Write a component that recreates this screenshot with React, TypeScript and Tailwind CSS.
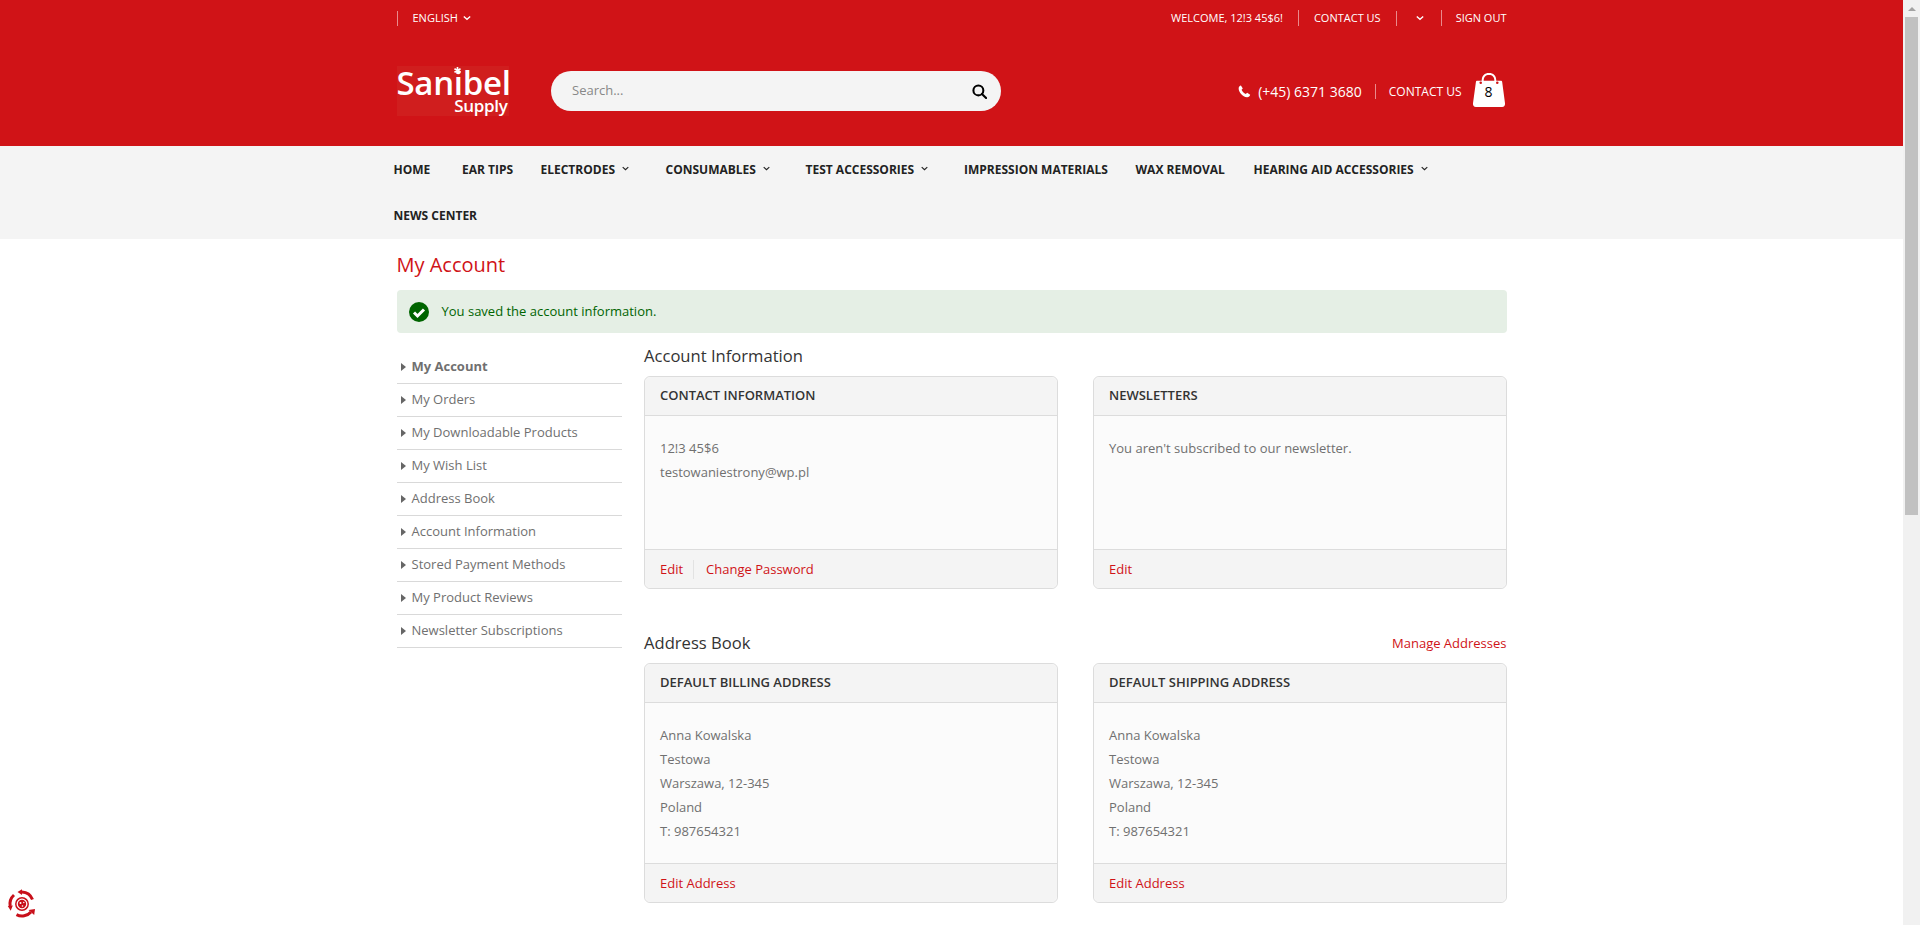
const sans = { fontFamily: '"Open Sans", sans-serif' };

function Chevron({ className }: { className: string }) {
  return (
    <svg viewBox="0 0 10 6" className={className} fill="none" stroke="currentColor" strokeWidth="1.7">
      <path d="M1 1l4 3.6L9 1" />
    </svg>
  );
}

const navTop = [
  { label: "Home", w: "w-[68.5px]" },
  { label: "Ear Tips", w: "w-[78.5px]" },
  { label: "Electrodes", arrow: true, w: "w-[125px]" },
  { label: "Consumables", arrow: true, w: "w-[140px]" },
  { label: "Test Accessories", arrow: true, w: "w-[158.5px]" },
  { label: "Impression Materials", w: "w-[171.5px]" },
  { label: "Wax Removal", w: "w-[118px]" },
  { label: "Hearing Aid Accessories", arrow: true, w: "w-[190px]" },
];

const side = [
  "My Account",
  "My Orders",
  "My Downloadable Products",
  "My Wish List",
  "Address Book",
  "Account Information",
  "Stored Payment Methods",
  "My Product Reviews",
  "Newsletter Subscriptions",
];

function Card({
  title,
  lines,
  links,
  tall,
}: {
  title: string;
  lines: string[];
  links: string[];
  tall?: boolean;
}) {
  return (
    <div className={`flex w-[414px] flex-col rounded-[6px] border border-[#dcdcdc] bg-[#fbfbfb] ${tall ? "h-[240px]" : "h-[213px]"}`}>
      <div className="flex h-[39px] shrink-0 items-center rounded-t-[6px] border-b border-[#dcdcdc] bg-[#f4f4f4] px-[15.5px] text-[13px] font-semibold uppercase text-[#333]">
        {title}
      </div>
      <div className="flex-1 px-[15.5px] pt-[20px] text-[13px] leading-[24px] text-[#707070]">
        {lines.map((l) => (
          <p key={l}>{l}</p>
        ))}
      </div>
      <div className="flex h-[39px] shrink-0 items-center rounded-b-[6px] border-t border-[#dcdcdc] bg-[#f4f4f4] px-[15.5px] pt-[1px] text-[13px] text-[#d01317]">
        {links.map((l, i) => (
          <span key={l} className={i > 0 ? "ml-[10px] border-l border-[#e2e2e2] pl-[12px]" : ""}>
            {l}
          </span>
        ))}
      </div>
    </div>
  );
}

export default function App() {
  const address = ["Anna Kowalska", "Testowa", "Warszawa, 12-345", "Poland", "T: 987654321"];
  return (
    <div style={sans} className="relative flex h-[925px] w-[1920px] overflow-hidden bg-white">
      <div className="w-[1903px]">
        <header className="h-[146px] bg-[#d01317] text-white">
          <div className="mx-auto w-[1110px]">
            <div className="flex h-[36px] items-center text-[11px] uppercase">
              <div className="flex h-[15px] items-center border-l border-[#e98a8c] pl-[15px]">
                English
                <Chevron className="ml-[5px] h-[6px] w-[8px]" />
              </div>
              <div className="ml-auto flex items-center">
                <span className="pr-[15px]">Welcome, 12!3 45$6!</span>
                <span className="border-l border-[#e98a8c] px-[15px]">Contact Us</span>
                <span className="flex h-[15px] w-[45px] items-center justify-center border-l border-[#e98a8c] pl-[2px]">
                  <Chevron className="h-[6px] w-[8px]" />
                </span>
                <span className="border-l border-[#e98a8c] pl-[14px]">Sign Out</span>
              </div>
            </div>
            <div className="mt-[30px] flex h-[50px] items-center">
              <div className="flex h-[50px] w-[112px] flex-col items-end bg-[#d01e1e] pt-[1px]">
                <svg viewBox="0 0 12 12" className="mr-[45px] h-[13px] w-[13px]" stroke="#fff" strokeWidth="2.8">
                  <path d="M6 0v12M.8 3l10.400 6M.8 9l10.400-6" />
                </svg>
                <span className="-mt-[4px] h-[26px] w-full whitespace-nowrap text-[33px] font-semibold leading-[26px] tracking-[-0.3px]">
                  Sanibel
                </span>
                <span className="mr-[1px] h-[20px] text-[17px] font-semibold leading-[20px] tracking-[-0.3px]">Supply</span>
              </div>
              <div className="ml-[42px] flex h-[40px] w-[450px] items-center justify-between rounded-[20px] bg-[#f4f4f4] pl-[21.5px] pr-[14px] text-[13px] text-[#888]">
                <span>Search...</span>
                <svg viewBox="0 0 16 16" className="h-[15px] w-[15px] text-black" fill="none" stroke="currentColor" strokeWidth="2.2">
                  <circle cx="6.8" cy="6.8" r="5.3" />
                  <path d="M10.6 10.6l4.4 4.4" strokeLinecap="round" />
                </svg>
              </div>
              <div className="ml-auto flex items-center">
                <svg viewBox="0 0 16 16" className="h-[13px] w-[13px]" fill="currentColor">
                  <path d="M3.6.7l2.3 3.5-1.5 1.6c.8 2 2.9 4.3 5.2 5.3l1.7-1.5 3.7 2.4c-.4 1.6-2 3.2-3.9 3C5.500 14.300.8 8.800.8 4.200.8 2.500 2.100 1 3.600.7z" />
                </svg>
                <span className="ml-[7px] pt-[1px] text-[14px]">(+45) 6371 3680</span>
                <span className="ml-[13px] h-[15px] border-l border-[#e98a8c]" />
                <span className="ml-[13px] pt-[1px] text-[12px] uppercase">Contact Us</span>
                <div className="relative mb-[3px] ml-[10px] mr-[1px] h-[35px] w-[34px]">
                  <svg viewBox="0 0 33 36" className="h-[35px] w-[34px]">
                    <path d="M9 9C9 3.500 12 1 16.500 1S24 3.500 24 9h4.500c1 0 1.500.5 1.600 1.500L33 32.500c.2 2-1 3.500-3 3.500H3c-2 0-3.200-1.500-3-3.500L3 10.500C3.100 9.500 3.600 9 4.500 9z" fill="#fff" />
                    <path d="M11 9c0-4 2-6 5.500-6S22 5 22 9z" fill="#d01317" />
                    <circle cx="8" cy="11" r="1.300" fill="#d01317" />
                    <circle cx="25" cy="11" r="1.300" fill="#d01317" />
                  </svg>
                  <span className="absolute inset-x-0 top-[11px] text-center text-[14px] leading-[18px] text-black">8</span>
                </div>
              </div>
            </div>
          </div>
        </header>

        <nav className="h-[93px] bg-[#f4f4f4] text-[12px] font-bold uppercase text-[#222]">
          <div className="mx-auto w-[1110px]">
            <div className="-ml-[3px] flex h-[46px] items-center pt-[1px]">
              {navTop.map((n) => (
                <div key={n.label} className={`flex shrink-0 items-center ${n.w}`}>
                  <span className="whitespace-nowrap">{n.label}</span>
                  {n.arrow && <Chevron className="mb-[3px] ml-[7px] h-[5px] w-[7px]" />}
                </div>
              ))}
            </div>
            <div className="-ml-[3px] flex h-[47px] items-center">News Center</div>
          </div>
        </nav>

        <main className="mx-auto w-[1110px]">
          <h1 className="pt-[12px] text-[20px] leading-[27px] text-[#d01317]">My Account</h1>
          <div className="mt-[12px] flex h-[43px] items-center rounded-[4px] bg-[#e5efe5] pl-[12px] text-[13px] text-[#006400]">
            <svg viewBox="0 0 20 20" className="h-[20px] w-[20px]">
              <circle cx="10" cy="10" r="10" fill="#006400" />
              <path d="M5 10.500l3.500 3.500L15 7.500" fill="none" stroke="#fff" strokeWidth="3" />
            </svg>
            <span className="ml-[13px]">You saved the account information.</span>
          </div>

          <div className="mt-[10px] flex">
            <aside className="w-[225px] shrink-0 pt-[8px]">
              {side.map((s, i) => (
                <div
                  key={s}
                  className={`flex h-[33px] items-center border-b border-[#d9d9d9] pl-[4px] text-[13px] text-[#707070] ${i === 0 ? "font-bold" : ""}`}
                >
                  <span className="mr-[6px] h-0 w-0 border-y-[4px] border-l-[5px] border-y-transparent border-l-[#666]" />
                  {s}
                </div>
              ))}
            </aside>
            <div className="ml-[22px] flex-1">
              <h2 className="h-[33px] pl-[0.5px] pt-[1px] text-[16.6px] leading-[24px] text-[#333]">Account Information</h2>
              <div className="flex justify-between">
                <Card title="Contact Information" lines={["12!3 45$6", "testowaniestrony@wp.pl"]} links={["Edit", "Change Password"]} />
                <Card title="Newsletters" lines={["You aren't subscribed to our newsletter."]} links={["Edit"]} />
              </div>
              <div className="mt-[41px] flex h-[33px] items-start justify-between">
                <h2 className="pl-[0.5px] pt-[1px] text-[16.6px] leading-[24px] text-[#333]">Address Book</h2>
                <span className="pt-[3px] text-[13px] leading-[20px] text-[#d01317]">Manage Addresses</span>
              </div>
              <div className="flex justify-between">
                <Card tall title="Default Billing Address" lines={address} links={["Edit Address"]} />
                <Card tall title="Default Shipping Address" lines={address} links={["Edit Address"]} />
              </div>
            </div>
          </div>
        </main>
      </div>

      <div className="flex w-[17px] shrink-0 flex-col items-center bg-[#f1f1f1]">
        <div className="mt-[7px] h-0 w-0 border-x-[4px] border-b-[4px] border-x-transparent border-b-[#a3a3a3]" />
        <div className="mt-[6px] h-[498px] w-[13px] bg-[#c1c1c1]" />
      </div>

      <svg viewBox="0 0 30 30" className="absolute bottom-[6px] left-[7px] h-[30px] w-[30px]" fill="none" stroke="#c8101a" strokeWidth="3">
        <path d="M25.500 10.500A12 12 0 0 0 15 3" />
        <path d="M15 .2L10.500 3l4.500 3z" fill="#c8101a" stroke="none" />
        <path d="M7 6A12 12 0 0 0 3.200 17" />
        <path d="M.8 17l2.900 4.800L5.800 16.500z" fill="#c8101a" stroke="none" />
        <path d="M9.500 25.700A12 12 0 0 0 24 23" />
        <path d="M21.500 21l6.500-1-.8 6z" fill="#c8101a" stroke="none" />
        <circle cx="15" cy="15" r="6.200" strokeWidth="1.500" />
        <circle cx="15" cy="15" r="4.200" fill="#c8101a" stroke="none" />
        <circle cx="13.500" cy="14" r="1" fill="#fff" stroke="none" />
        <circle cx="16.800" cy="13.500" r="0.700" fill="#fff" stroke="none" />
        <circle cx="15.500" cy="17" r="0.800" fill="#fff" stroke="none" />
      </svg>
    </div>
  );
}
